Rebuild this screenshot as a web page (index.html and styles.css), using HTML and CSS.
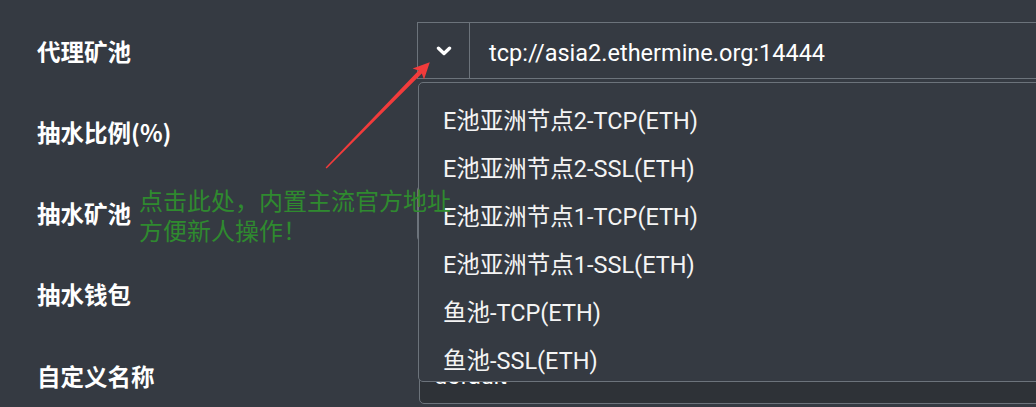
FILE: index.html
```html
<!DOCTYPE html>
<html lang="zh-CN">
<head>
<meta charset="utf-8">
<title>配置</title>
<link rel="stylesheet" href="styles.css">
</head>
<body>
<div class="form">
  <div class="row">
    <label class="label">代理矿池</label>
    <div class="group">
      <button class="toggle" type="button">
        <svg width="16" height="10" viewBox="0 0 16 10"><polyline points="2.5,2.2 8,7.4 13.5,2.2" fill="none" stroke="#fff" stroke-width="3.4" stroke-linecap="round" stroke-linejoin="round"/></svg>
      </button>
      <div class="field">tcp://asia2.ethermine.org:14444</div>
      <ul class="menu">
        <li>E池亚洲节点2-TCP(ETH)</li>
        <li>E池亚洲节点2-SSL(ETH)</li>
        <li>E池亚洲节点1-TCP(ETH)</li>
        <li>E池亚洲节点1-SSL(ETH)</li>
        <li>鱼池-TCP(ETH)</li>
        <li>鱼池-SSL(ETH)</li>
        <li>鱼池-TCP(ETC)</li>
      </ul>
    </div>
  </div>
  <div class="row">
    <label class="label">抽水比例(%)</label>
    <div class="input shift1">1</div>
  </div>
  <div class="row">
    <label class="label">抽水矿池</label>
    <div class="input">tcp://asia2.ethermine.org:14444</div>
  </div>
  <div class="row">
    <label class="label">抽水钱包</label>
    <div class="input shift1">0x</div>
  </div>
  <div class="row">
    <label class="label">自定义名称</label>
    <div class="input dark shift2">default</div>
  </div>
</div>
<div class="note">点击此处，内置主流官方地址<br>方便新人操作！</div>
<svg class="arrow" width="1036" height="407" viewBox="0 0 1036 407">
  <polygon points="325.6,167.4 418.6,70.6 412.6,68.4 429.8,62.2 424,79.4 421.8,73.6 326.6,168.6" fill="#f23b3b"/>
</svg>
</body>
</html>
```
FILE: styles.css
```css
html, body {
  margin: 0;
  padding: 0;
  background: #353a42;
  overflow: hidden;
  width: 1036px;
  height: 407px;
}
body {
  font-family: Roboto, "Noto Sans CJK SC", sans-serif;
  color: #fff;
  position: relative;
}
.form {
  padding: 22px 0 0 37px;
  display: flex;
  flex-direction: column;
  gap: 24.3px;
}
.row {
  display: flex;
  align-items: center;
  height: 57px;
}
.label {
  width: 380px;
  flex: none;
  font-family: "Noto Sans CJK SC", sans-serif;
  font-weight: 700;
  font-size: 23.5px;
  color: #fff;
}
.group {
  position: relative;
  display: flex;
  width: 700px;
  flex: none;
  height: 57px;
  box-sizing: border-box;
  border: 1px solid #6c737b;
  border-right: none;
}
.toggle {
  width: 52px;
  flex: none;
  background: transparent;
  border: none;
  border-right: 1px solid #6c737b;
  display: flex;
  align-items: center;
  justify-content: center;
  padding: 0;
  margin: 0;
}
.field {
  display: flex;
  align-items: center;
  padding: 4px 0 0 19px;
  font-size: 23.5px;
  color: #fff;
}
.input {
  width: 700px;
  flex: none;
  height: 57px;
  box-sizing: border-box;
  border: 1px solid #6c737b;
  border-radius: 5px;
  display: flex;
  align-items: center;
  padding-left: 14px;
  font-size: 23.5px;
  color: #fff;
}
.shift1 { margin-left: 1px; }
.shift2 { margin-left: 2px; }
.dark { background: #2e3237; }
.menu {
  position: absolute;
  left: 0;
  top: 59px;
  width: 700px;
  height: 300px;
  box-sizing: border-box;
  margin: 0;
  padding: 14px 0 0 0;
  list-style: none;
  background: #353a42;
  border: 1px solid #6c737b;
  border-radius: 5px;
  overflow: hidden;
  z-index: 2;
}
.menu li {
  height: 48px;
  line-height: 48px;
  padding-left: 24px;
  font-size: 23.5px;
  color: #f4f4f4;
  white-space: nowrap;
}
.note {
  position: absolute;
  left: 139px;
  top: 185px;
  font-family: "Noto Sans CJK SC", sans-serif;
  font-size: 24px;
  line-height: 30px;
  color: #2f8a2f;
  z-index: 3;
  white-space: nowrap;
}
.arrow {
  position: absolute;
  left: 0;
  top: 0;
  z-index: 4;
  pointer-events: none;
}
```
